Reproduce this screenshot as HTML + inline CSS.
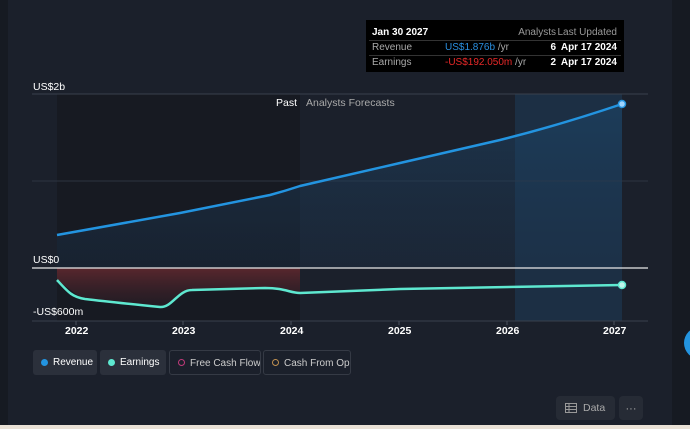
<!DOCTYPE html>
<html><head><style>
body{margin:0;width:690px;height:429px;background:#1b202b;font-family:"Liberation Sans",sans-serif;position:relative;overflow:hidden;color:#fff}
.t{position:absolute;font-size:11px;white-space:nowrap}
.r{text-align:right}
.btn{position:absolute;top:350px;height:25px;border-radius:3px;font-size:10px;line-height:25px;box-sizing:border-box;padding-left:20px;white-space:nowrap;overflow:hidden}
.dot{position:absolute;left:8px;top:9px;width:7px;height:7px;border-radius:50%;box-sizing:border-box}
</style></head><body>
<div style="position:absolute;left:0;top:0;width:8px;height:425px;background:#161a22"></div>
<div style="position:absolute;left:672px;top:0;width:18px;height:425px;background:#161a22"></div>
<div style="position:absolute;left:0;top:425px;width:690px;height:4px;background:#e9e1d6"></div>
<svg width="690" height="429" style="position:absolute;left:0;top:0">
<defs>
<linearGradient id="rg" x1="0" y1="0" x2="0" y2="1"><stop offset="0" stop-color="#1c4a70" stop-opacity=".8"/><stop offset="1" stop-color="#1c3550" stop-opacity=".5"/></linearGradient>
<linearGradient id="eg" x1="0" y1="0" x2="0" y2="1"><stop offset="0" stop-color="#6a2a30" stop-opacity=".8"/><stop offset="1" stop-color="#3a2028" stop-opacity=".3"/></linearGradient>
</defs>
<rect x="57" y="94" width="243" height="227" fill="#15181f" opacity=".7"/>
<rect x="515" y="94" width="107" height="227" fill="#1e3a55" opacity=".6"/>
<line x1="32" y1="94" x2="648" y2="94" stroke="#3a404c"/>
<line x1="32" y1="181" x2="648" y2="181" stroke="#2e3440"/>
<line x1="32" y1="321" x2="648" y2="321" stroke="#3a404c"/>
<path d="M57,235 L180,213 L270,195 Q285,191 300,186 L400,163 L500,140 Q560,125 622,104 L622,268 L57,268Z" fill="url(#rg)" opacity=".6"/>
<path d="M57,268 L300,268 L300,293 L270,288 L190,290 L167,305 L160,307 L80,297 L57,280Z" fill="url(#eg)"/>
<path d="M57,235 L180,213 L270,195 Q285,191 300,186 L400,163 L500,140 Q560,125 622,104" fill="none" stroke="#2394e0" stroke-width="2.5"/>
<path d="M57,280 C68,292 72,297 85,299 C110,302 140,305 160,307 C172,308 178,290 192,290 L265,288 C285,288 290,293 300,293 L400,289 L622,285" fill="none" stroke="#5ee8d0" stroke-width="2.5"/>
<line x1="32" y1="268" x2="648" y2="268" stroke="#e8e8e8" stroke-width="1.2"/>
<circle cx="622" cy="104" r="3.5" fill="#9fd4ff" stroke="#2394e0" stroke-width="1.5"/>
<circle cx="622" cy="285" r="3.5" fill="#bff5ea" stroke="#5ee8d0" stroke-width="1.5"/>
<g stroke="#4a505c"><line x1="76" y1="321" x2="76" y2="325"/><line x1="183" y1="321" x2="183" y2="325"/><line x1="291" y1="321" x2="291" y2="325"/><line x1="399" y1="321" x2="399" y2="325"/><line x1="507" y1="321" x2="507" y2="325"/><line x1="614" y1="321" x2="614" y2="325"/></g>
<circle cx="700" cy="343" r="16" fill="#2394e0"/>
</svg>
<div style="position:absolute;left:366px;top:20px;width:258px;height:52px;background:#000"></div>
<div class="t" style="left:372px;top:27px;font-weight:bold;font-size:10px">Jan 30 2027</div>
<div class="t r" style="left:500px;width:56px;top:27px;color:#999;font-size:10px">Analysts</div>
<div class="t r" style="left:550px;width:67px;top:27px;color:#999;font-size:10px">Last Updated</div>
<div style="position:absolute;left:369px;top:40px;width:252px;height:1px;background:#333"></div>
<div style="position:absolute;left:369px;top:55px;width:252px;height:1px;background:#333"></div>
<div class="t" style="left:372px;top:42px;color:#aaa;font-size:10px">Revenue</div>
<div class="t" style="left:445px;top:42px;color:#2a8fe0;font-size:10px">US$1.876b <span style="color:#aaa">/yr</span></div>
<div class="t r" style="left:530px;width:26px;top:42px;font-weight:bold;font-size:10px">6</div>
<div class="t r" style="left:550px;width:67px;top:42px;font-weight:bold;font-size:10px">Apr 17 2024</div>
<div class="t" style="left:372px;top:57px;color:#aaa;font-size:10px">Earnings</div>
<div class="t" style="left:445px;top:57px;color:#e82828;font-size:10px">-US$192.050m <span style="color:#aaa">/yr</span></div>
<div class="t r" style="left:530px;width:26px;top:57px;font-weight:bold;font-size:10px">2</div>
<div class="t r" style="left:550px;width:67px;top:57px;font-weight:bold;font-size:10px">Apr 17 2024</div>
<div class="t" style="left:33px;top:81px;font-size:10.5px">US$2b</div>
<div class="t" style="left:33px;top:254px;font-size:10.5px">US$0</div>
<div class="t" style="left:33px;top:306px;font-size:10.5px">-US$600m</div>
<div class="t" style="left:276px;top:97px;font-size:10.5px">Past</div>
<div class="t" style="left:306px;top:97px;font-size:10.5px;color:#aaa">Analysts Forecasts</div>
<div class="t" style="left:65px;top:325px;font-weight:bold;font-size:10.5px">2022</div>
<div class="t" style="left:172px;top:325px;font-weight:bold;font-size:10.5px">2023</div>
<div class="t" style="left:280px;top:325px;font-weight:bold;font-size:10.5px">2024</div>
<div class="t" style="left:388px;top:325px;font-weight:bold;font-size:10.5px">2025</div>
<div class="t" style="left:496px;top:325px;font-weight:bold;font-size:10.5px">2026</div>
<div class="t" style="left:603px;top:325px;font-weight:bold;font-size:10.5px">2027</div>
<div class="btn" style="left:33px;width:64px;background:#2b303b"><span class="dot" style="background:#2394e0"></span>Revenue</div>
<div class="btn" style="left:100px;width:66px;background:#2b303b"><span class="dot" style="background:#5ee8d0"></span>Earnings</div>
<div class="btn" style="left:169px;width:92px;border:1px solid #353a45;color:#ccc"><span class="dot" style="border:1.5px solid #c03a7a;top:8px"></span>Free Cash Flow</div>
<div class="btn" style="left:263px;width:88px;border:1px solid #353a45;color:#ccc"><span class="dot" style="border:1.5px solid #c09050;top:8px"></span>Cash From Op</div>
<div style="position:absolute;left:556px;top:396px;width:59px;height:24px;background:#262b35;border-radius:4px;font-size:10.5px;color:#aaa;line-height:24px;padding-left:27px;box-sizing:border-box">Data
<svg width="12" height="10" style="position:absolute;left:9px;top:7px"><rect x=".5" y=".5" width="11" height="9" fill="none" stroke="#999"/><path d="M.5 3.5H11.5M.5 6.5H11.5M4 .5V9.5" stroke="#999"/></svg></div>
<div style="position:absolute;left:619px;top:396px;width:24px;height:24px;background:#262b35;border-radius:4px;color:#aaa;text-align:center;line-height:26px;font-size:11px">···</div>
</body></html>
